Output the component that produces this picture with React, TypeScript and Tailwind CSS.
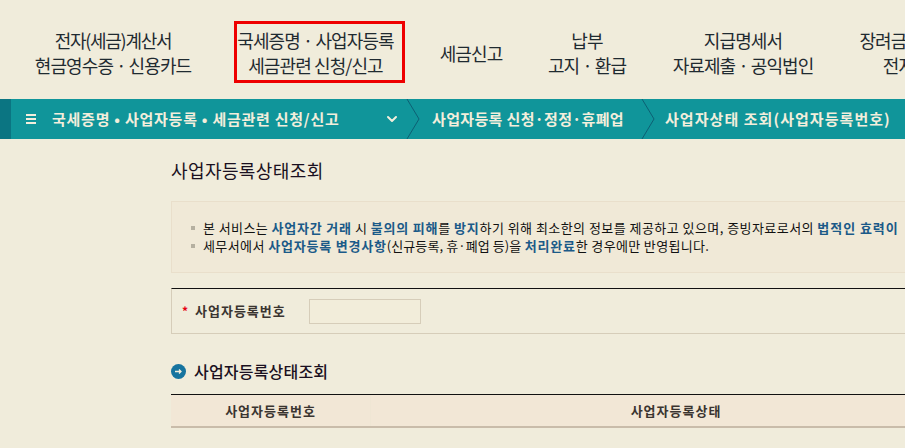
import React from 'react';
import { ChevronDown } from 'lucide-react';

const font = { fontFamily: '"Noto Sans CJK KR", "Liberation Sans", sans-serif' };

function NavItem({ lines, width, active }: { lines: React.ReactNode[]; width: string; active?: boolean }) {
  return (
    <div className={`${width} shrink-0 flex justify-center`}>
      <div
        className={`flex flex-col items-center justify-center h-[62px] pt-[2px] whitespace-nowrap text-[18px] leading-[25px] tracking-[-0.9px] text-[#1f2a30] ${
          active ? 'w-[171px] border-[3px] border-[#ee0000] pr-[8px]' : ''
        }`}
      >
        {lines.map((line, i) => (
          <span key={i}>{line}</span>
        ))}
      </div>
    </div>
  );
}

function Crumb({ label, width, first, tracking }: { label: string; width: string; first?: boolean; tracking: string }) {
  return (
    <div className={`${width} shrink-0 flex items-center relative h-full`}>
      <span className={`text-[15px] font-bold ${tracking} text-[#f3eedc] whitespace-nowrap`}>{label}</span>
      {first && <ChevronDown size={16} strokeWidth={3} className="absolute right-[21px] top-[12px] text-[#f3eedc]" />}
      <svg className="absolute right-0 top-0" width="15" height="40" viewBox="0 0 15 40" fill="none">
        <path d="M1 0 L13 20 L1 40" stroke="#0d5f73" strokeWidth="1" />
      </svg>
    </div>
  );
}

export default function App() {
  return (
    <div className="w-[905px] h-[448px] overflow-hidden bg-[#f0ecdb] text-[#111]" style={font}>
      <nav className="h-[99px] flex pt-[21px] w-[1100px]">
        <NavItem
          width="w-[226px]"
          lines={[<span className="tracking-[-1.3px]">전자(세금)계산서</span>, '현금영수증 · 신용카드']}
        />
        <NavItem width="w-[187px]" active lines={['국세증명 · 사업자등록', '세금관련 신청/신고']} />
        <NavItem width="w-[116px]" lines={['세금신고']} />
        <NavItem width="w-[116px]" lines={['납부', '고지 · 환급']} />
        <NavItem width="w-[196px]" lines={['지급명세서', '자료제출 · 공익법인']} />
        <NavItem width="w-[162px]" lines={['장려금 · 연말정산', '전자기부금']} />
      </nav>

      <div className="h-[40px] flex bg-[#10959a] w-[1000px]">
        <div className="w-[11px] shrink-0 bg-[#0b7582]" />
        <div className="w-[41px] shrink-0 flex items-center justify-center pr-[2px]">
          <div className="w-[10px] flex flex-col gap-[2px]">
            <div className="h-[2px] bg-[#f3eedc]" />
            <div className="h-[2px] bg-[#f3eedc]" />
            <div className="h-[2px] bg-[#f3eedc]" />
          </div>
        </div>
        <Crumb first width="w-[369px]" tracking="tracking-[0.75px]" label="국세증명 • 사업자등록 • 세금관련 신청/신고" />
        <div className="w-[11px] shrink-0" />
        <Crumb width="w-[224px]" tracking="tracking-[0.35px]" label="사업자등록 신청·정정·휴폐업" />
        <div className="w-[9px] shrink-0" />
        <span className="self-center text-[15px] font-bold tracking-[1.05px] text-[#f3eedc] whitespace-nowrap">
          사업자상태 조회(사업자등록번호)
        </span>
      </div>

      <main className="pl-[171px] w-[1100px]">
        <h1 className="mt-[19px] text-[18px] leading-[25px] tracking-[0.4px] text-[#1a1020]">사업자등록상태조회</h1>

        <div className="mt-[18px] h-[72px] border border-[#e9dfcb] bg-[#f0e9d7] pl-[19px] pt-[17px] text-[13px] leading-[18px] tracking-[0.4px] whitespace-nowrap">
          <p className="flex items-center">
            <span className="w-[4px] h-[4px] bg-[#b5b0a0] mr-[8px]" />
            본 서비스는&nbsp;<b className="text-[#1b5a88] tracking-[0.8px]">사업자간 거래</b>&nbsp;시&nbsp;
            <b className="text-[#1b5a88] tracking-[0.8px]">불의의 피해</b>를&nbsp;<b className="text-[#1b5a88] tracking-[0.8px]">방지</b>
            <span className="tracking-[0.45px]">하기 위해 최소한의 정보를 제공하고 있으며, 증빙자료로서의</span>&nbsp;
            <b className="text-[#1b5a88] tracking-[0.95px]">법적인 효력이</b>
          </p>
          <p className="flex items-center">
            <span className="w-[4px] h-[4px] bg-[#b5b0a0] mr-[8px]" />
            세무서에서&nbsp;<b className="text-[#1b5a88] tracking-[0.8px]">사업자등록 변경사항</b>
            <span className="tracking-[0.1px]">(신규등록, 휴·폐업 등)을</span>&nbsp;
            <b className="text-[#1b5a88] tracking-[0.8px]">처리완료</b>
            <span className="tracking-[0.35px]">한 경우에만 반영됩니다.</span>
          </p>
        </div>

        <div className="mt-[15px] h-[46px] border-t border-t-[#111] border-l border-b border-[#d6cdb9] flex items-center pl-[10px]">
          <span className="text-[#e60012] text-[12px] font-bold w-[13px]">*</span>
          <label className="w-[114px] text-[13px] tracking-[1px] font-bold text-[#3a3430]">사업자등록번호</label>
          <div className="w-[112px] h-[25px] border border-[#d6cdb9] bg-[#f2edda]" />
        </div>

        <div className="mt-[26px] flex items-center gap-[8px]">
          <span className="w-[15px] h-[15px] rounded-full bg-[#16749f] flex items-center justify-center">
            <svg width="9" height="9" viewBox="0 0 9 9" fill="none">
              <path d="M1 4.5 H7 M5 2.5 L7 4.5 L5 6.5" stroke="#f3eedc" strokeWidth="1.3" />
            </svg>
          </span>
          <h2 className="text-[16px] leading-[22px] font-medium tracking-[0.2px] text-[#1a1020]">사업자등록상태조회</h2>
        </div>

        <div className="mt-[12px] h-[34px] border-t border-t-[#111] border-b-2 border-b-[#c9bcaa] bg-[#f2e7d6] flex items-center text-[13px] tracking-[1px] font-bold text-[#3a3430]">
          <div className="w-[200px] h-full flex items-center justify-center border-r border-[#efe6d4]">사업자등록번호</div>
          <div className="w-[610px] text-center">사업자등록상태</div>
        </div>
      </main>
    </div>
  );
}
